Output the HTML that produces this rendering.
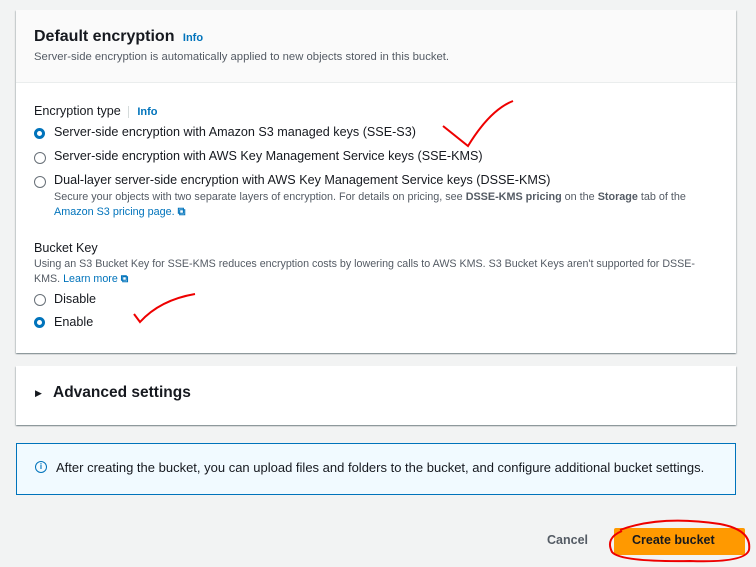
<!DOCTYPE html>
<html><head><meta charset="utf-8"><style>
body{margin:0;width:756px;height:567px;background:#f2f3f3;font-family:"Liberation Sans",sans-serif;color:#16191f;position:relative;overflow:hidden}
.a{position:absolute;white-space:nowrap}
.panel{position:absolute;left:16px;width:720px;background:#fff;box-shadow:0 1px 1px 0 rgba(0,28,36,.3),1px 1px 1px 0 rgba(0,28,36,.15),-1px 1px 1px 0 rgba(0,28,36,.15)}
.info{color:#0073bb;font-weight:bold;font-size:11px}
.sm{font-size:11.3px;color:#545b64}
.r{position:absolute;width:10px;height:10px;border:1.5px solid #687078;border-radius:50%;background:#fff}
.r.on{border:3.5px solid #0073bb;width:5px;height:5px}
.t{font-size:12.6px}
a{color:#0073bb}
</style></head><body>
<div class="panel" style="top:10px;height:343px">
<div style="height:72px;background:#fafafa;border-bottom:1px solid #eaeded"></div>
</div>
<div class="a" style="left:34px;top:28px;font-size:16px;font-weight:bold">Default encryption <span class="info" style="margin-left:4px">Info</span></div>
<div class="a sm" style="left:34px;top:51px">Server-side encryption is automatically applied to new objects stored in this bucket.</div>
<div class="a t" style="left:34px;top:104px">Encryption type <span style="border-left:1px solid #d5dbdb;margin-left:4px;padding-left:8px" class="info">Info</span></div>
<div class="r on" style="left:34px;top:128px"></div>
<div class="a t" style="left:54px;top:125px">Server-side encryption with Amazon S3 managed keys (SSE-S3)</div>
<div class="r" style="left:34px;top:152px"></div>
<div class="a t" style="left:54px;top:149px">Server-side encryption with AWS Key Management Service keys (SSE-KMS)</div>
<div class="r" style="left:34px;top:176px"></div>
<div class="a t" style="left:54px;top:173px">Dual-layer server-side encryption with AWS Key Management Service keys (DSSE-KMS)</div>
<div class="a sm" style="left:54px;top:191px;font-size:10.8px">Secure your objects with two separate layers of encryption. For details on pricing, see <b>DSSE-KMS pricing</b> on the <b>Storage</b> tab of the</div>
<div class="a sm" style="left:54px;top:206px;font-size:10.8px"><a>Amazon S3 pricing page.</a> <span style="color:#0073bb;font-weight:bold">⧉</span></div>
<div class="a t" style="left:34px;top:241px">Bucket Key</div>
<div class="a sm" style="left:34px;top:258px;font-size:10.7px">Using an S3 Bucket Key for SSE-KMS reduces encryption costs by lowering calls to AWS KMS. S3 Bucket Keys aren't supported for DSSE-</div>
<div class="a sm" style="left:34px;top:273px;font-size:10.7px">KMS. <a>Learn more</a> <span style="color:#0073bb;font-weight:bold">⧉</span></div>
<div class="r" style="left:34px;top:294px"></div>
<div class="a t" style="left:54px;top:292px">Disable</div>
<div class="r on" style="left:34px;top:317px"></div>
<div class="a t" style="left:54px;top:315px">Enable</div>
<svg class="a" style="left:0;top:0" width="756" height="567">
<path d="M443 126 L468 146 Q490 110 513 101" stroke="#e00" stroke-width="2" fill="none"/>
<path d="M134 314 L140 322 Q160 300 195 294" stroke="#e00" stroke-width="2" fill="none"/>
</svg>
<div class="panel" style="top:366px;height:59px"></div>
<div class="a" style="left:35px;top:388px;font-size:9px">▶</div>
<div class="a" style="left:53px;top:384px;font-size:15.5px;font-weight:bold">Advanced settings</div>
<div class="a" style="left:16px;top:443px;width:718px;height:50px;background:#f1faff;border:1px solid #0073bb"></div>
<div class="a" style="left:35px;top:461px;width:10px;height:10px;border:1.5px solid #0073bb;border-radius:50%;font-size:8px;color:#0073bb;text-align:center;line-height:10px;font-weight:bold">i</div>
<div class="a t" style="left:56px;top:460px;font-size:13px">After creating the bucket, you can upload files and folders to the bucket, and configure additional bucket settings.</div>
<div class="a" style="left:547px;top:533px;font-size:12.5px;font-weight:bold;color:#545b64">Cancel</div>
<div class="a" style="left:614px;top:528px;width:131px;height:27px;background:#ff9900;border-radius:2px"></div>
<div class="a" style="left:632px;top:533px;font-size:12.5px;font-weight:bold">Create bucket</div>
<svg class="a" style="left:0;top:0" width="756" height="567">
<path d="M620 530 Q660 515 720 524 Q752 530 749 550 Q745 563 690 561 Q620 562 612 552 Q605 538 622 531" stroke="#e00" stroke-width="2" fill="none"/>
</svg>
</body></html>
